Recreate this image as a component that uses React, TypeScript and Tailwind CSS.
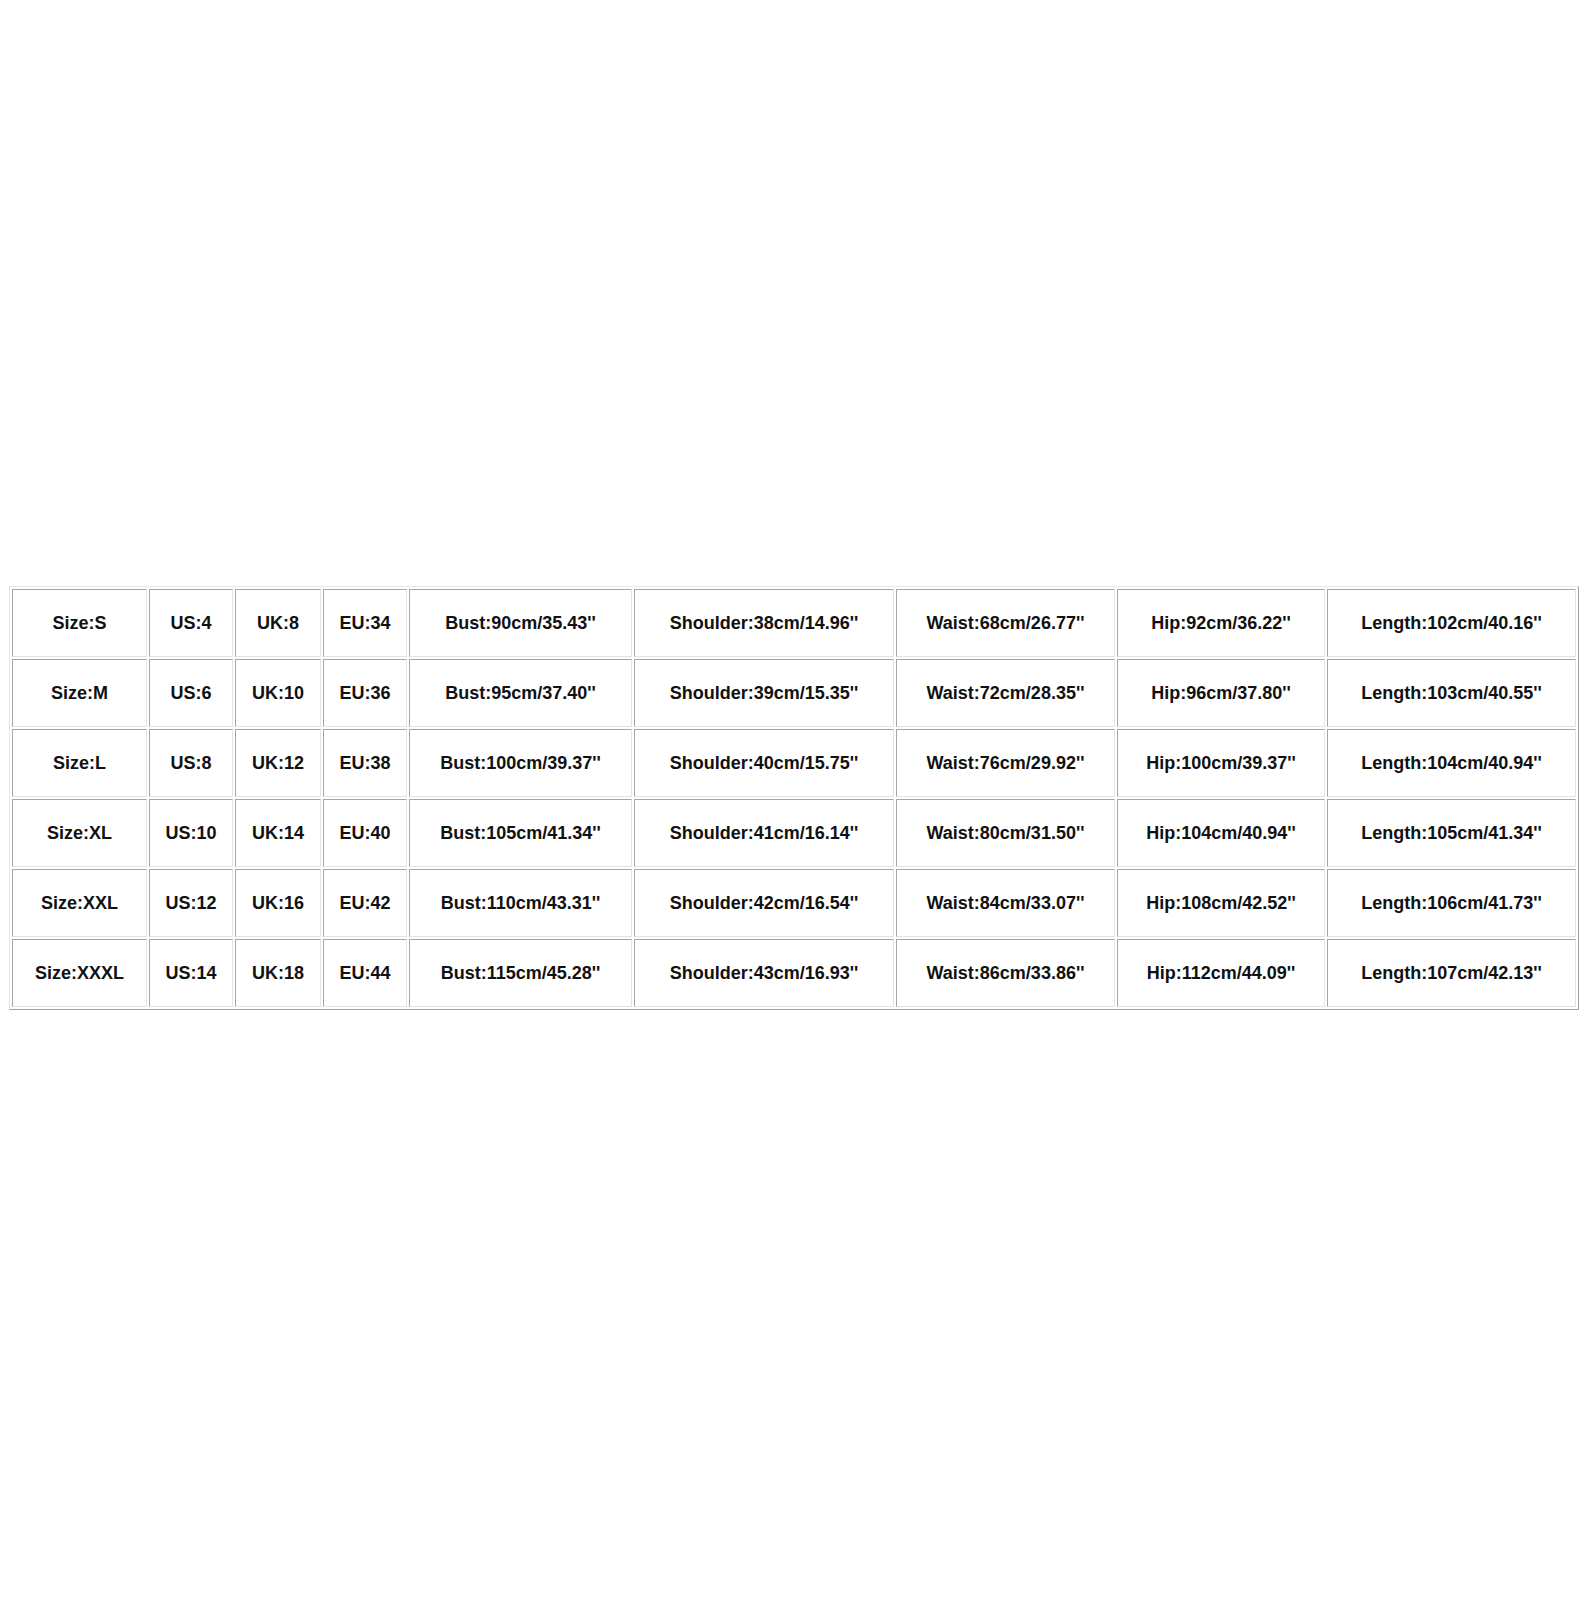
const rows = [
  ["Size:S", "US:4", "UK:8", "EU:34", "Bust:90cm/35.43''", "Shoulder:38cm/14.96''", "Waist:68cm/26.77''", "Hip:92cm/36.22''", "Length:102cm/40.16''"],
  ["Size:M", "US:6", "UK:10", "EU:36", "Bust:95cm/37.40''", "Shoulder:39cm/15.35''", "Waist:72cm/28.35''", "Hip:96cm/37.80''", "Length:103cm/40.55''"],
  ["Size:L", "US:8", "UK:12", "EU:38", "Bust:100cm/39.37''", "Shoulder:40cm/15.75''", "Waist:76cm/29.92''", "Hip:100cm/39.37''", "Length:104cm/40.94''"],
  ["Size:XL", "US:10", "UK:14", "EU:40", "Bust:105cm/41.34''", "Shoulder:41cm/16.14''", "Waist:80cm/31.50''", "Hip:104cm/40.94''", "Length:105cm/41.34''"],
  ["Size:XXL", "US:12", "UK:16", "EU:42", "Bust:110cm/43.31''", "Shoulder:42cm/16.54''", "Waist:84cm/33.07''", "Hip:108cm/42.52''", "Length:106cm/41.73''"],
  ["Size:XXXL", "US:14", "UK:18", "EU:44", "Bust:115cm/45.28''", "Shoulder:43cm/16.93''", "Waist:86cm/33.86''", "Hip:112cm/44.09''", "Length:107cm/42.13''"],
];

export default function App() {
  return (
    <div className="h-[1600px] w-[1590px] bg-white pl-[9px] pt-[586px] font-['Liberation_Sans',Arial,sans-serif]">
      {/* size chart, old-school border=1 table look */}
      <div className="inline-grid grid-cols-[135px_84px_86px_84px_223px_260px_219px_208px_249px] grid-rows-[repeat(6,68px)] gap-[2px] border border-t-[#e6e6e6] border-l-[#e6e6e6] border-r-[#a3a3a3] border-b-[#a3a3a3] p-[2px]">
        {rows.map((row, i) =>
          row.map((cell, j) => (
            <div
              key={`${i}-${j}`}
              className="flex items-center justify-center border border-t-[#a6a6a6] border-l-[#a6a6a6] border-r-[#e3e3e3] border-b-[#e3e3e3] text-[18px] font-bold text-[#111]"
            >
              {cell}
            </div>
          ))
        )}
      </div>
    </div>
  );
}
